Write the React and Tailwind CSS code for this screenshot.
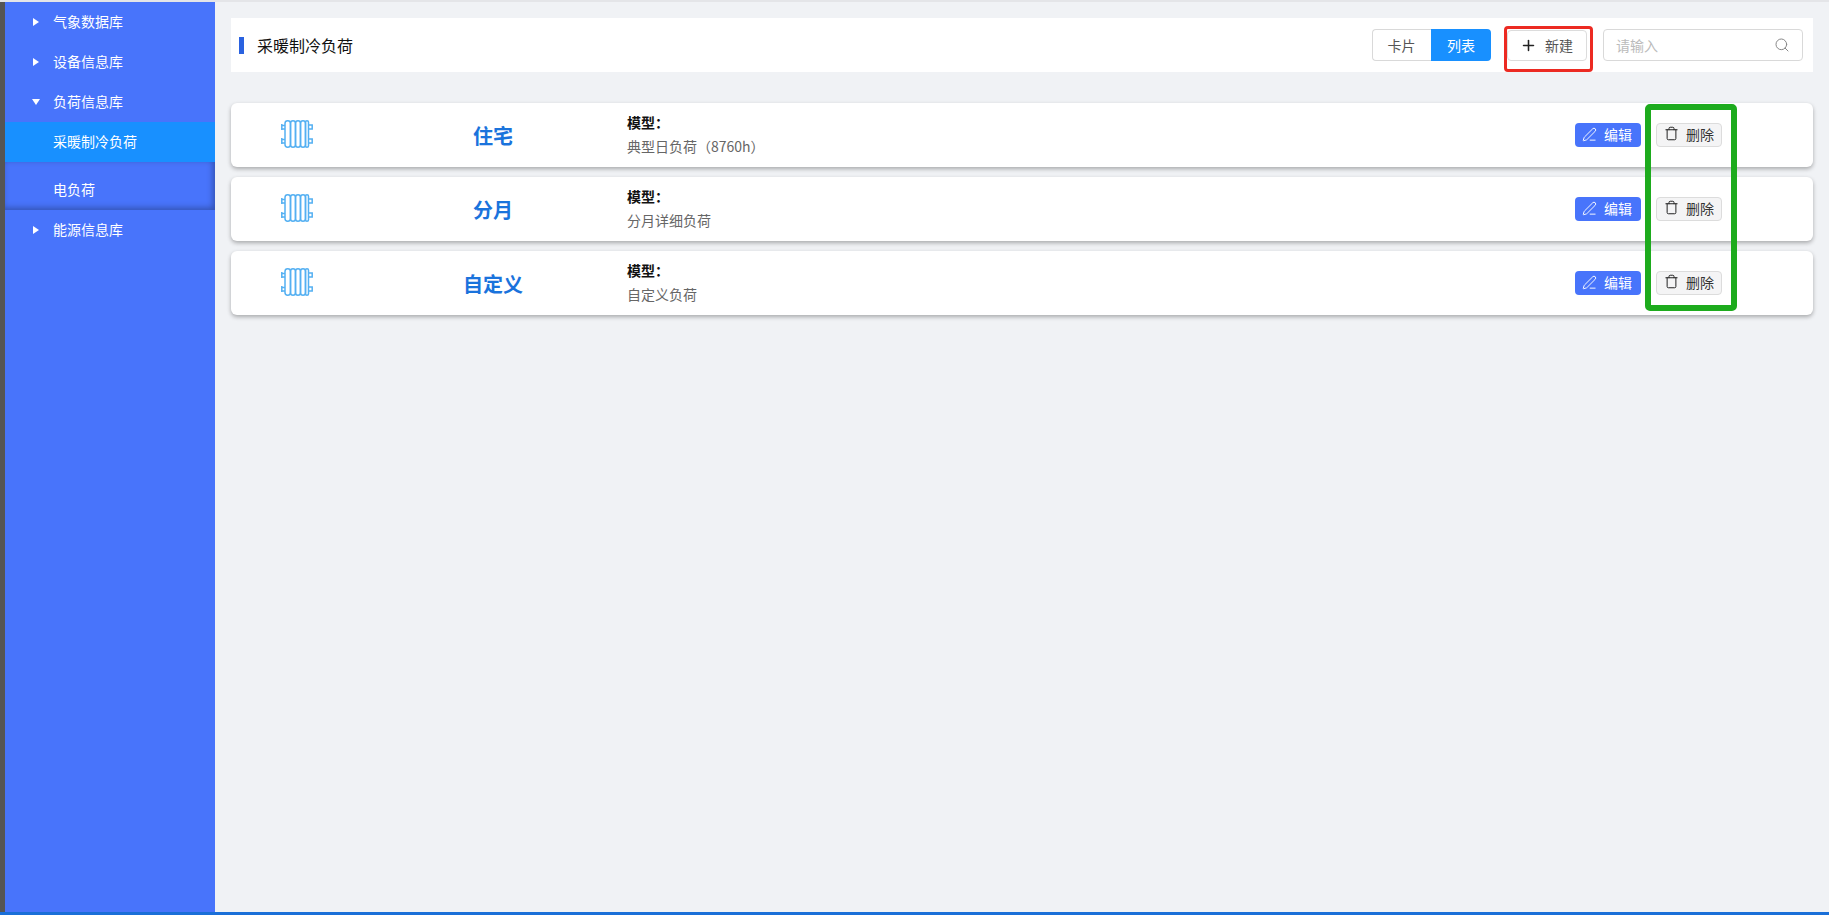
import React from 'react';
import { PenLine, Trash, Plus, Search } from 'lucide-react';

const font = 'font-["Microsoft_YaHei","Noto_Sans_CJK_SC",sans-serif]';

const Radiator = () => (
  <svg width="32" height="28" viewBox="0 0 32 28" fill="none" stroke="#54b0f2" strokeWidth="1.5">
    <rect x="4" y="0.8" width="5.5" height="26.4" rx="2.7" />
    <rect x="9.5" y="0.8" width="5" height="26.4" rx="2.5" />
    <rect x="14.5" y="0.8" width="5" height="26.4" rx="2.5" />
    <rect x="19.5" y="0.8" width="5" height="26.4" rx="2.5" />
    <rect x="24.5" y="0.8" width="3" height="26.4" rx="1.5" />
    <path d="M0.8 4v6M0.8 5.5H4M0.8 9H4M0.8 18v6M0.8 19.5H4M0.8 23H4" />
    <path d="M27.5 5h3.7v4h-3.7M27.5 19h3.7v4h-3.7" />
  </svg>
);

const Arrow = ({ open }) => (
  <span className="w-3 flex justify-center">
    {open ? (
      <span className="w-0 h-0 border-x-[4px] border-x-transparent border-t-[6px] border-t-white" />
    ) : (
      <span className="w-0 h-0 border-y-[4px] border-y-transparent border-l-[6px] border-l-white" />
    )}
  </span>
);

const NavGroup = ({ label, open }) => (
  <div className="h-10 flex items-center pl-[25px] gap-[11px] pb-px text-white text-[14px]">
    <Arrow open={open} />
    <span>{label}</span>
  </div>
);

const rows = [
  { name: '住宅', desc: '典型日负荷（8760h）' },
  { name: '分月', desc: '分月详细负荷' },
  { name: '自定义', desc: '自定义负荷' },
];

const Row = ({ name, desc }) => (
  <div className="h-16 bg-white rounded-md shadow-[0_2px_4px_rgba(0,0,0,0.3)] flex items-center">
    <div className="w-[131px] flex justify-center -mt-[2px]">
      <Radiator />
    </div>
    <div className="w-[262px] text-center text-[#1a73dc] text-[20px] font-bold mt-px">{name}</div>
    <div className="w-[160px] ml-[3px] -mt-[3px]">
      <div className="text-[14px] leading-[20px] font-bold text-[#111]">模型：</div>
      <div className="text-[14px] leading-[20px] mt-[4px] text-[#666]">{desc}</div>
    </div>
    <div className="ml-auto mr-[91px] flex items-center gap-[15px] -mt-px">
      <button className="w-[66px] h-6 rounded bg-[#4874fb] text-white text-[14px] flex items-center justify-center gap-[7px] pr-[2px]">
        <PenLine size={15} strokeWidth={1.5} />
        编辑
      </button>
      <button className="w-[66px] h-6 rounded bg-[#f4f4f5] border border-[#dcdcdc] text-[#333] text-[14px] flex items-center justify-center gap-[7px]">
        <Trash size={15} strokeWidth={1.6} className="text-[#222] -mt-[2px]" />
        删除
      </button>
    </div>
  </div>
);

export default function App() {
  return (
    <div className={`relative h-[915px] overflow-hidden flex flex-col bg-[#f0f2f5] ${font}`}>
      <div className="h-[2px] bg-[#e4e5e8]" />
      <div className="flex-1 flex">
        <aside className="w-[215px] bg-[#4874fb] border-l-[5px] border-l-[#555]">
          <NavGroup label="气象数据库" />
          <NavGroup label="设备信息库" />
          <NavGroup label="负荷信息库" open />
          <div className="h-10 bg-[#1890ff] flex items-center pl-[48px] pb-[2px] text-white text-[14px]">采暖制冷负荷</div>
          <div className="h-12 flex items-center pl-[48px] pt-[7px] text-white text-[14px] shadow-[inset_-2px_-2px_6px_rgba(0,0,0,0.3)]">电负荷</div>
          <NavGroup label="能源信息库" />
        </aside>
        <main className="flex-1 pl-4 pr-4 pt-4">
          <div className="h-[54px] bg-white flex items-center pl-2 pr-[10px]">
            <span className="w-[5px] h-[17px] bg-[#2a62e0]" />
            <span className="ml-[13px] text-[16px] text-[#111] -mt-px">采暖制冷负荷</span>
            <div className="ml-auto flex items-center">
              <div className="flex h-8 text-[14px]">
                <span className="w-[59px] flex items-center justify-center border border-[#d9d9d9] border-r-0 rounded-l text-[#555] pr-px">卡片</span>
                <span className="w-[60px] flex items-center justify-center bg-[#1890ff] text-white rounded-r">列表</span>
              </div>
              <button className="ml-4 w-20 h-[31px] border border-[#dcdcdc] rounded flex items-center justify-center gap-[8px] pr-px text-[14px] text-[#555]">
                <Plus size={17} strokeWidth={2.2} className="text-[#222]" />
                新建
              </button>
              <div className="ml-4 w-[200px] h-8 border border-[#d9d9d9] rounded flex items-center justify-between pl-3 pr-3 text-[14px] text-[#bbb]">
                请输入
                <Search size={16} strokeWidth={1.5} className="text-[#888]" />
              </div>
            </div>
          </div>
          <div className="mt-[31px] flex flex-col gap-[10px]">
            {rows.map((r) => (
              <Row key={r.name} {...r} />
            ))}
          </div>
        </main>
      </div>
      <div className="h-[3px] bg-[#1a6fd8]" />
      {/* annotation boxes drawn over the screenshot */}
      <div className="absolute left-[1504px] top-[26px] w-[89px] h-[46px] border-[3px] border-[#ec2a22] rounded-[4px]" />
      <div className="absolute left-[1645px] top-[104px] w-[92px] h-[207px] border-[6px] border-[#1dab1d] rounded-[5px]" />
    </div>
  );
}
